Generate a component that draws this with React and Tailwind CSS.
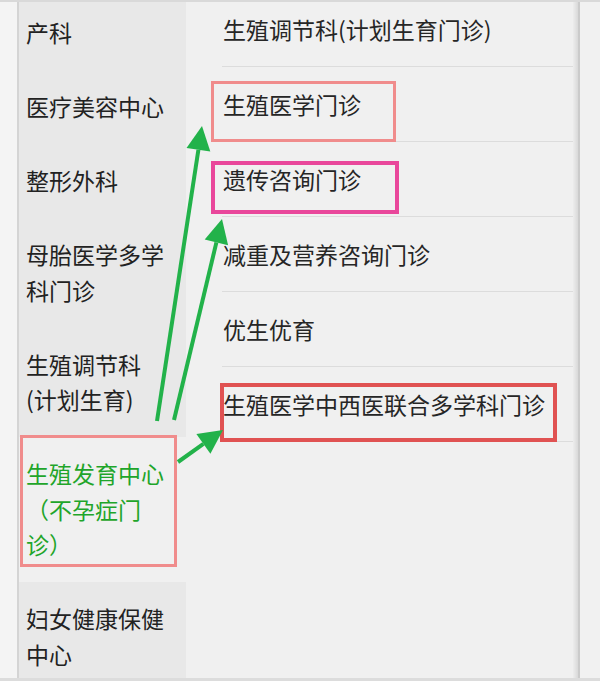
import React from 'react';

const leftItems = [
  { lines: ['产科'] },
  { lines: ['医疗美容中心'] },
  { lines: ['整形外科'] },
  { lines: ['母胎医学多学', '科门诊'] },
  { lines: ['生殖调节科', '(计划生育)'] },
  { lines: ['生殖发育中心', '（不孕症门', '诊）'], active: true },
  { lines: ['妇女健康保健', '中心'] },
];

const rightItems = [
  '生殖调节科(计划生育门诊)',
  '生殖医学门诊',
  '遗传咨询门诊',
  '减重及营养咨询门诊',
  '优生优育',
  '生殖医学中西医联合多学科门诊',
];

// green annotation arrows: line from tail to head base, then the head
const arrows = [
  { line: [157, 421, 198.4, 149.7], head: '202,126 210.3,151.5 186.5,147.9' },
  { line: [174, 420, 216.4, 242.4], head: '222,219 228.1,245.2 204.7,239.6' },
  { line: [178, 462, 203.4, 443.9], head: '223,430 210.4,453.7 196.4,434.1' },
];

const Arrows = () => (
  <svg className="absolute inset-0 pointer-events-none" width="600" height="681" viewBox="0 0 600 681">
    {arrows.map((a, i) => (
      <g key={i}>
        <line x1={a.line[0]} y1={a.line[1]} x2={a.line[2]} y2={a.line[3]} stroke="#22b24a" strokeWidth="4" />
        <polygon points={a.head} fill="#22b24a" />
      </g>
    ))}
  </svg>
);

const App = () => {
  return (
    <div className="relative w-[600px] h-[681px] overflow-hidden flex flex-col bg-[#f2f2f2] font-['Noto_Sans_CJK_SC','Noto_Sans',sans-serif]">
      <div className="h-[2px] bg-[#d9d9d9] shrink-0" />

      <div className="flex flex-1 min-h-0">
        {/* left edge */}
        <div className="w-[17px] bg-[#f4f4f4]" />
        <div className="w-[2px] bg-[#d4d4d4]" />

        {/* category column */}
        <div className="w-[167px] bg-[#e8e8e8] overflow-hidden">
          <div className="-mt-[6px]">
            {leftItems.map((item, i) => (
              <div
                key={i}
                className={`pl-[7px] py-[19.25px] text-[23px] leading-[35.5px] whitespace-nowrap ${
                  item.active ? 'bg-[#f0f0f0] text-[#1fa52a]' : 'text-[#222222]'
                }`}
              >
                {item.lines.map((l, j) => (
                  <div key={j}>{l}</div>
                ))}
              </div>
            ))}
          </div>
        </div>

        {/* clinic list */}
        <div className="flex-1 bg-[#f0f0f0] overflow-hidden">
          <div className="-mt-[10px]">
            {rightItems.map((name, i) => (
              <div
                key={i}
                className="ml-[36px] pl-[1px] h-[75px] flex items-center border-b border-[#dcdcdc] text-[23px] text-[#262626] whitespace-nowrap"
              >
                {name}
              </div>
            ))}
          </div>
        </div>

        {/* right edge */}
        <div className="w-[5px] bg-gradient-to-r from-[#ededed] to-[#d9d9d9]" />
        <div className="w-[2px] bg-[#cbcbcb]" />
        <div className="w-[20px] bg-[#f1f1f1]" />
      </div>

      <div className="h-[3px] bg-[#dcdcdc] shrink-0" />

      {/* annotation boxes */}
      <div className="absolute left-[211px] top-[81px] w-[185px] h-[61px] border-[3px] border-[#f08c8c]" />
      <div className="absolute left-[211px] top-[161px] w-[188px] h-[53px] border-[4px] border-[#e9479b]" />
      <div className="absolute left-[220px] top-[383px] w-[337px] h-[59px] border-[4px] border-[#e05252]" />
      <div className="absolute left-[20px] top-[435px] w-[157px] h-[132px] border-[3px] border-[#f08c8c]" />

      <Arrows />
    </div>
  );
};

export default App;
